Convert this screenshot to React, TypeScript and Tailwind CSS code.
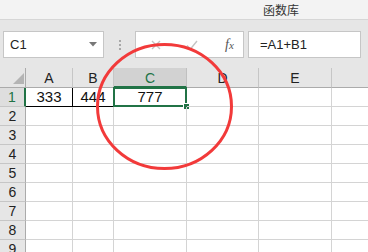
import React from "react";

const COLS = [
  { key: "A", w: 47 },
  { key: "B", w: 41 },
  { key: "C", w: 73 },
  { key: "D", w: 72 },
  { key: "E", w: 73 },
  { key: "", w: 40 },
];

const ROWS = [1, 2, 3, 4, 5, 6, 7, 8, 9];

const values: Record<string, string> = { A1: "333", B1: "444", C1: "777" };

export default function App() {
  return (
    <div
      className="relative w-[368px] h-[252px] overflow-hidden bg-white"
      style={{ fontFamily: '"Liberation Sans", "Noto Sans CJK SC", sans-serif' }}
    >
      {/* ribbon */}
      <div className="h-[20px] bg-[#f3f3f3] border-b border-[#d6d6d6] flex items-center pl-[263px]">
        <span className="text-[12px] leading-none text-[#333]" style={{ fontFamily: '"Noto Sans CJK SC", sans-serif' }}>
          函数库
        </span>
      </div>

      {/* formula bar */}
      <div className="h-[48px] bg-[#e6e6e6] flex pt-[11px] box-border">
        <div className="shrink-0 ml-[3px] w-[101px] h-[27px] bg-white border border-[#c6c6c6] flex items-center justify-between pl-[6px] pr-[6px] box-border">
          <span className="text-[13px] text-[#222]">C1</span>
          <svg width="8" height="5" viewBox="0 0 8 5">
            <polygon points="0,0 8,0 4,4.5" fill="#777" />
          </svg>
        </div>
        <div className="shrink-0 w-[31px] h-[27px] flex items-center justify-center">
          <div className="flex flex-col gap-[2px]">
            <span className="w-[2px] h-[2px] bg-[#a8a8a8]" />
            <span className="w-[2px] h-[2px] bg-[#a8a8a8]" />
            <span className="w-[2px] h-[2px] bg-[#a8a8a8]" />
          </div>
        </div>
        <div className="shrink-0 w-[109px] h-[27px] bg-white border border-[#c6c6c6] flex items-center box-border relative">
          <svg className="ml-[15px]" width="10" height="10" viewBox="0 0 10 10">
            <path d="M1 1 L9 9 M9 1 L1 9" stroke="#c4c4c4" strokeWidth="1.4" />
          </svg>
          <svg className="ml-[25px]" width="12" height="10" viewBox="0 0 12 10">
            <path d="M1 5.5 L4.5 9 L11 1" stroke="#c4c4c4" strokeWidth="1.4" fill="none" />
          </svg>
          <span
            className="ml-[27px] text-[14px] italic text-[#555]"
            style={{ fontFamily: '"Liberation Serif", serif' }}
          >
            f<span className="text-[11px]">x</span>
          </span>
        </div>
        <div className="shrink-0 ml-[4px] w-[113px] h-[27px] bg-white border border-[#c6c6c6] flex items-center pl-[11px] box-border">
          <span className="text-[13px] text-[#222]">=A1+B1</span>
        </div>
      </div>

      {/* sheet */}
      <div className="flex flex-col">
        {/* header row */}
        <div className="flex h-[20px]">
          <div className="shrink-0 w-[26px] h-[20px] bg-[#e6e6e6] border-r border-b border-[#ababab] box-border flex items-end justify-end pr-[1px] pb-[3px]">
            <svg width="11" height="11" viewBox="0 0 11 11">
              <polygon points="11,0 11,11 0,11" fill="#b4b4b4" />
            </svg>
          </div>
          {COLS.map((c, i) => {
            const sel = c.key === "C";
            return (
              <div
                key={i}
                className={
                  sel
                    ? "shrink-0 h-[20px] bg-[#d2d2d2] border-r border-[#c0c0c0] border-b-2 border-b-[#217346] box-border flex items-center justify-center text-[14px] text-[#217346] pt-[2px]"
                    : "shrink-0 h-[20px] bg-[#e6e6e6] border-r border-[#c6c6c6] border-b border-b-[#ababab] box-border flex items-center justify-center text-[14px] text-[#222] pt-[1px]"
                }
                style={{ width: c.w }}
              >
                {c.key}
              </div>
            );
          })}
        </div>

        {ROWS.map((r) => (
          <div key={r} className="flex h-[19px]">
            <div
              className={
                r === 1
                  ? "shrink-0 w-[26px] h-[19px] bg-[#dedede] border-r-2 border-r-[#217346] border-b border-b-[#c6c6c6] box-border flex items-center justify-center text-[14px] text-[#217346]"
                  : "shrink-0 w-[26px] h-[19px] bg-[#e6e6e6] border-r border-r-[#ababab] border-b border-b-[#c6c6c6] box-border flex items-center justify-center text-[14px] text-[#222]"
              }
            >
              {r}
            </div>
            {COLS.map((c, i) => {
              const id = `${c.key}${r}`;
              const boxed = r === 1 && (c.key === "A" || c.key === "B");
              const sel = id === "C1";
              return (
                <div
                  key={i}
                  className={
                    boxed
                      ? "shrink-0 relative h-[19px] border-r border-b border-black box-border flex items-center justify-center text-[15px] text-[#111]"
                      : "shrink-0 relative h-[19px] border-r border-b border-[#d4d4d4] box-border flex items-center justify-center text-[15px] text-[#111]"
                  }
                  style={{ width: c.w }}
                >
                  {c.key ? values[id] ?? "" : ""}
                  {sel && (
                    <div className="absolute left-[-1px] top-[-1px] right-[-1px] bottom-[-1px] border-2 border-[#217346]">
                      <div className="absolute right-[-5px] bottom-[-5px] w-[7px] h-[7px] bg-[#217346] border border-white" />
                    </div>
                  )}
                </div>
              );
            })}
          </div>
        ))}
      </div>

      {/* red annotation circle */}
      <svg className="absolute left-0 top-0 pointer-events-none" width="368" height="252" viewBox="0 0 368 252">
        <ellipse cx="164.5" cy="106.5" rx="67" ry="62" fill="none" stroke="#f23a3a" strokeWidth="3" />
      </svg>
    </div>
  );
}
